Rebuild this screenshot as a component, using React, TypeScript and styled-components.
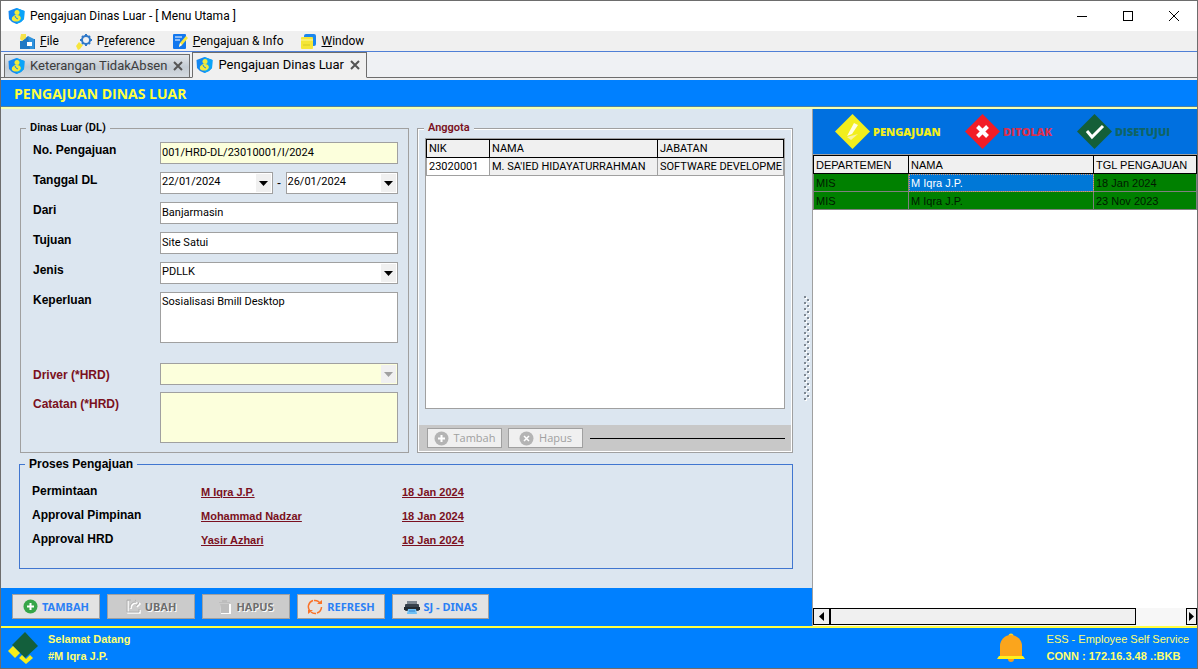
import React from "react";
import styled, { createGlobalStyle, css } from "styled-components";

const color = {
  frame: "#6d6d6d",
  blue: "#0080ff",
  deepBlue: "#0070e0",
  panel: "#dce6f0",
  yellow: "#ffff40",
  line: "#a0a0a0",
  cream: "#fcffdc",
  maroon: "#7a1020",
};

const sans = `"Liberation Sans", Arial, sans-serif`;
const ui = `"Open Sans", "Noto Sans", sans-serif`;
const narrow = `Roboto, "Liberation Sans", sans-serif`;

const GlobalStyle = createGlobalStyle`
  *, *::before, *::after { box-sizing: border-box; }
  body { margin: 0; font: 12px/16px ${sans}; color: #000; background: #fff; }
  button, input, select, textarea { font: inherit; color: inherit; margin: 0; border-radius: 0; }
`;

const Window = styled.div`
  display: flex;
  flex-direction: column;
  min-height: 100vh;
  border: 1px solid ${color.frame};
  background: #f0f0f0;
`;

const TitleBar = styled.header`
  display: flex;
  align-items: center;
  height: 30px;
  padding-left: 7px;
  gap: 5px;
  background: #fff;
  font-family: ${narrow};
`;

const Title = styled.h1`
  flex: 1;
  margin: 0;
  font-size: 12px;
  font-weight: 400;
`;

const WindowControls = styled.div`
  display: flex;
`;

const WindowButton = styled.button`
  display: grid;
  place-items: center;
  width: 46px;
  height: 30px;
  padding: 0;
  border: 0;
  background: none;
`;

const MenuBar = styled.nav`
  display: flex;
  gap: 17px;
  height: 21px;
  padding-left: 17px;
  border-bottom: 1px solid #4f7fd6;
`;

const MenuItem = styled.button`
  display: flex;
  align-items: center;
  gap: 4px;
  padding: 0;
  border: 0;
  background: none;
  font: 12px/16px ${narrow};
`;

const TabBar = styled.div`
  display: flex;
  align-items: flex-end;
  gap: 2px;
  height: 26px;
  padding-left: 3px;
  background: #eff1f4;
  box-shadow: inset 0 -1px #6d6d6d;
`;

const Tab = styled.div<{ $active?: boolean }>`
  display: flex;
  align-items: center;
  height: ${(p) => (p.$active ? 26 : 24)}px;
  padding: 0 4px 0 3px;
  border: 1px solid #6d6d6d;
  border-bottom-color: ${(p) => (p.$active ? "#f0f0f0" : "#6d6d6d")};
  background: ${(p) =>
    p.$active
      ? "#f0f0f0"
      : "linear-gradient(#e3e7eb, #c3cbd3 55%, #d5dbe1)"};
  color: ${(p) => (p.$active ? "#000" : "#3c3c3c")};
  font: 13px/16px ${narrow};
`;

const TabLabel = styled.button`
  display: flex;
  align-items: center;
  gap: 5px;
  padding: 0;
  border: 0;
  background: none;
`;

const TabClose = styled.button`
  display: grid;
  place-items: center;
  width: 22px;
  height: 20px;
  margin-right: -4px;
  padding: 0;
  border: 0;
  background: none;
`;

const PageHeader = styled.div`
  height: 29px;
  margin-top: 2px;
  padding: 6px 13px 0;
  background: ${color.blue};
  border-bottom: 2px solid #f4ffb0;
  box-shadow: inset 0 -1px #4f7f9f;
`;

const PageTitle = styled.h2`
  margin: 0;
  color: ${color.yellow};
  font: 700 14px/16px ${ui};
`;

const Body = styled.main`
  flex: 1;
  display: grid;
  grid-template-columns: minmax(0, 811fr) minmax(0, 385fr);
`;

const LeftPane = styled.section`
  display: flex;
  flex-direction: column;
`;

const Work = styled.div`
  flex: 1;
  display: grid;
  grid-template-columns: minmax(0, 1fr) 19px;
  padding-left: 18px;
  background: ${color.panel};
`;

const Sheets = styled.div`
  display: flex;
  flex-direction: column;
  gap: 4px;
  padding-top: 12px;
`;

const TopRow = styled.div`
  display: grid;
  grid-template-columns: minmax(0, 389fr) minmax(0, 376fr);
  gap: 8px;
  padding-left: 1px;
`;

const Group = styled.fieldset<{ $tone?: string; $etched?: boolean }>`
  min-width: 0;
  margin: 0;
  padding: 7px 10px 9px 12px;
  border: 1px solid ${(p) => p.$tone ?? color.line};
  ${(p) =>
    p.$etched &&
    css`
      display: flex;
      flex-direction: column;
      padding: 3px 1px 1px;
      box-shadow: inset 0 0 0 1px #fff;
    `}
`;

const Legend = styled.legend<{ $maroon?: boolean; $ui?: boolean; $inset?: number }>`
  margin-left: ${(p) => p.$inset ?? -7}px;
  padding: 0 4px;
  line-height: 14px;
  background: ${color.panel};
  font-family: ${(p) => (p.$ui ? narrow : sans)};
  font-size: ${(p) => (p.$ui ? 11 : 12)}px;
  font-weight: ${(p) => (p.$ui ? 600 : 700)};
  color: ${(p) => (p.$maroon ? color.maroon : "#000")};
`;

const Field = styled.div<{ $gap?: number }>`
  display: grid;
  grid-template-columns: 127px minmax(0, 1fr);
  margin-bottom: ${(p) => p.$gap ?? 8}px;
`;

const FieldLabel = styled.label<{ $hrd?: boolean }>`
  padding-top: ${(p) => (p.$hrd ? 4 : 0)}px;
  font-weight: 700;
  color: ${(p) => (p.$hrd ? color.maroon : "#000")};
`;

const control = css`
  width: 100%;
  padding: 0 1px 2px;
  border: 1px solid ${color.line};
  background: #fff;
  font: 11px/16px ${narrow};
  color: #000;
  outline: 0;
`;

const TextBox = styled.input<{ $cream?: boolean }>`
  ${control}
  height: 22px;
  background: ${(p) => (p.$cream ? color.cream : "#fff")};
`;

const TextArea = styled.textarea<{ $cream?: boolean }>`
  ${control}
  display: block;
  height: 51px;
  padding-top: 1px;
  resize: none;
  background: ${(p) => (p.$cream ? color.cream : "#fff")};
`;

const ComboFrame = styled.span`
  position: relative;
  display: block;
  min-width: 0;
`;

const Combo = styled.select<{ $cream?: boolean }>`
  ${control}
  display: block;
  height: 22px;
  appearance: none;
  opacity: 1;
  background: ${(p) => (p.$cream ? color.cream : "#fff")};
`;

const ComboArrow = styled.span<{ $off?: boolean }>`
  position: absolute;
  top: 2px;
  right: 2px;
  bottom: 2px;
  display: grid;
  place-items: center;
  width: 15px;
  background: #f0f0f0;
  color: ${(p) => (p.$off ? "#a0a0a0" : "#000")};
  pointer-events: none;
`;

const DateRange = styled.div`
  display: grid;
  grid-template-columns: 1fr 13px 1fr;
  text-align: center;
  line-height: 22px;
`;

const MemberBox = styled.div`
  flex: 1;
  margin: 0 6px 16px;
  border: 1px solid ${color.line};
  background: #fff;
`;

const Grid = styled.table`
  width: 100%;
  border-collapse: collapse;
  table-layout: fixed;
  font: 11px/16px ${narrow};
`;

const HeadCell = styled.th`
  height: 18px;
  padding: 0 2px;
  border: 1px solid #000;
  background: #f0f0f0;
  font-weight: 400;
  text-align: left;
  white-space: nowrap;
`;

const Cell = styled.td<{ $shade?: boolean }>`
  height: 18px;
  padding: 0 2px;
  border: 1px solid ${color.line};
  background: ${(p) => (p.$shade ? "#f0f0f0" : "#fff")};
  white-space: nowrap;
  overflow: hidden;
`;

const MemberActions = styled.div`
  display: flex;
  align-items: center;
  gap: 6px;
  height: 26px;
  padding: 0 6px 0 8px;
  background: #c8c8c8;
`;

const SmallButton = styled.button`
  display: flex;
  align-items: center;
  justify-content: center;
  gap: 5px;
  width: 75px;
  height: 20px;
  padding: 0;
  border: 1px solid ${color.line};
  background: #f0f0f0;
  color: #a0a0a0;
  font: 11px/16px ${ui};
`;

const Rule = styled.hr`
  flex: 1;
  margin: 0 0 0 1px;
  border: 0;
  border-top: 1px solid #000;
`;

const Steps = styled.dl`
  display: grid;
  grid-template-columns: 169px 201px 1fr;
  row-gap: 8px;
  margin: 0;
  padding: 5px 0 12px;
`;

const StepName = styled.dt`
  line-height: 16px;
  font-weight: 700;
`;

const StepValue = styled.dd`
  margin: 0;
  padding-top: 3px;
  line-height: 13px;
  font-size: 11px;
`;

const StepLink = styled.a`
  color: ${color.maroon};
  font-weight: 700;
  text-decoration: underline;
`;

const Splitter = styled.div`
  display: grid;
  place-items: center end;
  padding: 0 1px 0 0;
`;

const ActionBar = styled.div`
  display: flex;
  flex-wrap: wrap;
  gap: 7px;
  padding: 6px 11px 7px;
  background: ${color.blue};
`;

const ActionButton = styled.button<{ $wide?: boolean }>`
  display: flex;
  align-items: center;
  justify-content: center;
  gap: 4px;
  width: ${(p) => (p.$wide ? 97 : 88)}px;
  height: 25px;
  padding: 0;
  border: 1px solid ${color.line};
  background: #e3e3e3;
  color: #2a80f5;
  font: 700 11px/16px "Noto Sans", ${ui};
  &:disabled {
    background: #cbcbcb;
    color: #6d6d6d;
    text-shadow: 1px 1px #fff;
  }
`;

const RightPane = styled.section`
  display: flex;
  flex-direction: column;
  border-left: 1px solid ${color.line};
  background: #fff;
`;

const StatusKey = styled.ul`
  display: grid;
  grid-template-columns: 130px 112px 1fr;
  align-items: center;
  height: 46px;
  margin: 0;
  padding: 0 0 0 22px;
  list-style: none;
  background: ${color.deepBlue};
  border-bottom: 1px solid ${color.line};
`;

const KeyItem = styled.li<{ $tone: string }>`
  display: flex;
  align-items: center;
  gap: 3px;
  color: ${(p) => p.$tone};
  font: 800 11px/16px ${ui};
`;

const RequestArea = styled.div`
  flex: 1;
  overflow: hidden;
`;

const RequestGrid = styled(Grid)`
  font-family: ${sans};
`;

const RequestCell = styled(Cell)<{ $selected?: boolean }>`
  border-color: #808080;
  background: ${(p) => (p.$selected ? "#0078d7" : "#008000")};
  color: ${(p) => (p.$selected ? "#fff" : "#001a00")};
  outline: ${(p) => (p.$selected ? "1px dotted #d89a70" : "0")};
  outline-offset: -1px;
`;

const ScrollBar = styled.div`
  display: flex;
  height: 18px;
  padding-bottom: 1px;
  background: #f7f7f7;
`;

const ScrollArrow = styled.button<{ $clipped?: boolean }>`
  display: grid;
  place-items: center;
  width: ${(p) => (p.$clipped ? 11 : 17)}px;
  padding: 0;
  border: 1px solid #000;
  background: #f0f0f0;
`;

const ScrollTrack = styled.div`
  flex: 1;
`;

const ScrollThumb = styled.div`
  width: 86%;
  height: 100%;
  border: 1px solid #000;
  background: #f0f0f0;
`;

const StatusBar = styled.footer`
  display: flex;
  align-items: center;
  height: 42px;
  padding: 0 8px 0 6px;
  border-top: 2px solid ${color.yellow};
  background: ${color.blue};
  color: #ffff70;
  font-size: 11px;
`;

const StatusText = styled.p<{ $push?: boolean }>`
  margin: 0 ${(p) => (p.$push ? "auto" : "0")} 0 0;
  line-height: 17px;
`;

const Strong = styled.strong`
  display: block;
`;

const Plain = styled.span`
  display: block;
`;

const StatusIcon = styled.span<{ $gap: number }>`
  display: flex;
  margin-right: ${(p) => p.$gap}px;
`;

function AppLogo() {
  return (
    <svg width="17" height="18" viewBox="0 0 17 18" aria-hidden="true">
      <path d="M8.500 1 16.500 4l-.5 8-3 3-4.500 2L4 15l-3-3L.5 4z" fill="#1488f2" />
      <path d="M8.500 1 16.500 4l-.5 8-3 3-4.500 2z" fill="#0aa4f8" />
      <circle cx="9" cy="5.500" r="2.500" fill="#f2ea3a" />
      <path d="M4 13c-1-3 2-5 5-5s5 3 3 5c-2 2-6 2-8 0z" fill="#f2ea3a" />
      <path d="M7 9l1 2 2 1" stroke="#1488f2" fill="none" />
    </svg>
  );
}

function FileIcon() {
  return (
    <svg width="18" height="17" viewBox="0 0 18 17" aria-hidden="true">
      <path d="M2 16V8h2l6-5 2 3h5v10z" fill="#1f78c4" />
      <path d="M10 3l6 3v10h-4z" fill="#2f93de" />
      <path d="M3 1h5v4L4 8 2 6z" fill="#f4e24a" />
      <rect x="9" y="9" width="5" height="4" fill="#fff" />
    </svg>
  );
}

function GearIcon() {
  return (
    <svg width="17" height="17" viewBox="0 0 17 17" aria-hidden="true">
      <g fill="none" stroke="#2f78c8">
        <circle cx="10" cy="7" r="4" strokeWidth="2" />
        <path
          d="M10 1v2M10 11v2M4 7h2M14 7h2M6 3l1 1M13 10l1 1M14 3l-1 1M6 11l1-1"
          strokeWidth="2"
        />
      </g>
      <path d="M0 13l3-4 2 2 2 1-3 4-2 1z" fill="#f7e53c" />
    </svg>
  );
}

function NoteIcon() {
  return (
    <svg width="17" height="17" viewBox="0 0 17 17" aria-hidden="true">
      <rect x="1" y="1" width="13" height="15" rx="1" fill="#1277ee" />
      <path d="M3 4h7M3 7h5" stroke="#fff" />
      <path d="M7 14l1-4 6-7 2 2-6 7z" fill="#f7e53c" />
      <path d="M7 14l1-4 2 2z" fill="#fff" />
    </svg>
  );
}

function WindowsIcon() {
  return (
    <svg width="17" height="17" viewBox="0 0 17 17" aria-hidden="true">
      <rect x="4" y="1" width="12" height="12" rx="2" fill="#1a86ee" />
      <rect x="1" y="4" width="12" height="12" rx="1" fill="#f5e636" />
      <path d="M1 7h12" stroke="#fff8a0" />
      <path d="M3 12h7" stroke="#d6cb22" />
    </svg>
  );
}

function CloseMark() {
  return (
    <svg width="10" height="10" viewBox="0 0 10 10" aria-hidden="true">
      <path d="M1 1l8 8M9 1L1 9" stroke="#555" strokeWidth="2" />
    </svg>
  );
}

function Triangle({ dir }: { dir: "down" | "left" | "right" }) {
  const shape = { down: "M0 2h9L4.500 7z", left: "M7 0v9L2 4.500z", right: "M2 0v9l5-4.500z" }[dir];
  return (
    <svg width="9" height="9" viewBox="0 0 9 9" aria-hidden="true">
      <path d={shape} fill="currentColor" />
    </svg>
  );
}

function Disc({ tone, cross }: { tone: string; cross?: boolean }) {
  return (
    <svg width="15" height="15" viewBox="0 0 15 15" aria-hidden="true">
      <circle cx="7.500" cy="7.500" r="7" fill={tone} />
      <path
        d={cross ? "M5 5l5 5M10 5l-5 5" : "M7.500 4v7M4 7.500h7"}
        stroke="#fff"
        strokeWidth={cross ? 1.5 : 2}
      />
    </svg>
  );
}

function EditIcon() {
  return (
    <svg width="15" height="15" viewBox="0 0 15 15" fill="none" aria-hidden="true">
      <path d="M2 2v12h12v-3M5 10c0-4 2-6 6-6M10 2l4 3-3 3" stroke="#fff" strokeWidth="1.500" />
      <path d="M5 1H1v12h12v-3M4 9c0-4 2-6 6-6M9 1l4 3-3 3" stroke="#b0b0b0" />
    </svg>
  );
}

function TrashIcon() {
  return (
    <svg width="14" height="14" viewBox="0 0 14 14" aria-hidden="true">
      <path d="M2 4h11v10H3z" fill="#fff" />
      <path d="M1 2h11v1H1zM4 0h5v2H4zM2 4h9v9H3z" fill="#bdbdbd" />
    </svg>
  );
}

function RefreshIcon() {
  return (
    <svg width="16" height="16" viewBox="0 0 16 16" fill="none" aria-hidden="true">
      <path
        d="M6 1.500A6.500 6.500 0 0 0 3 12M7 1.500A6.500 6.500 0 0 1 13.500 5M14.500 8A6.500 6.500 0 0 1 10 14M9 14.500A6.500 6.500 0 0 1 4 13"
        stroke="#fa7228"
        strokeWidth="1.500"
      />
      <path d="M10 5h5V1zM6 11H1v4z" fill="#fa7228" />
    </svg>
  );
}

function PrinterIcon() {
  return (
    <svg width="16" height="16" viewBox="0 0 16 16" aria-hidden="true">
      <rect x="3" y="2" width="10" height="4" fill="#7d8791" />
      <rect x="1" y="5" width="14" height="7" rx="1" fill="#37414b" />
      <path d="M0 8h16v3H0z" fill="#222a31" />
      <path d="M4 10h8l1 5H3z" fill="#6fc0f4" />
      <path d="M5 12h6" stroke="#2f7fd0" />
    </svg>
  );
}

function Diamond({ tone, kind }: { tone: string; kind: "draft" | "cross" | "check" }) {
  return (
    <svg width="35" height="35" viewBox="0 0 35 35" fill="none" aria-hidden="true">
      <path d="M17.500 0 35 17.500 17.500 35 0 17.500z" fill={tone} />
      {kind === "draft" && (
        <>
          <path d="M19 9l4 2-6 9-5 2z" fill="#fffde0" />
          <path d="M12 23l11-3-7 6z" fill="#f8f3a0" />
        </>
      )}
      {kind === "cross" && (
        <path d="M12.500 12.500l10 10M22.500 12.500l-10 10" stroke="#fff" strokeWidth="4" />
      )}
      {kind === "check" && <path d="M10 17l5 6 11-11" stroke="#fff" strokeWidth="3" />}
    </svg>
  );
}

function CompanyLogo() {
  return (
    <svg width="32" height="34" viewBox="0 0 32 34" aria-hidden="true">
      <path d="M18 1l13 14-13 12L5 14z" fill="#135f3c" />
      <path d="M6 15l7 7-5 5-7-7z" fill="#f6ee1a" />
      <path d="M12 27l3-3 4 4 4-4 3 3-7 6z" fill="#f6ee1a" />
    </svg>
  );
}

function BellIcon() {
  return (
    <svg width="30" height="30" viewBox="0 0 30 30" aria-hidden="true">
      <circle cx="15" cy="3" r="2.500" fill="#ffd21f" />
      <circle cx="15" cy="26" r="3" fill="#f59a1a" />
      <path d="M4 24V13a11 11 0 0 1 22 0v11z" fill="#fba51c" />
      <path d="M3 23h24l2 3H1z" fill="#fff01c" />
    </svg>
  );
}

function Grip() {
  const dots = Array.from({ length: 35 }, (_, i) => i);
  return (
    <svg width="7" height="106" viewBox="0 0 7 106" aria-hidden="true">
      {dots.map((i) => (
        <React.Fragment key={i}>
          <rect x={(i % 2) * 3 + 1} y={i * 3 + 1} width="2" height="2" fill="#fff" />
          <rect x={(i % 2) * 3} y={i * 3} width="2" height="2" fill="#7d8791" />
        </React.Fragment>
      ))}
    </svg>
  );
}

function ComboBox(props: { id: string; label?: string; value: string; disabled?: boolean }) {
  return (
    <ComboFrame>
      <Combo
        id={props.id}
        aria-label={props.label}
        disabled={props.disabled}
        $cream={props.disabled}
        defaultValue={props.value}
      >
        <option value={props.value}>{props.value}</option>
      </Combo>
      <ComboArrow $off={props.disabled}>
        <Triangle dir="down" />
      </ComboArrow>
    </ComboFrame>
  );
}

const menus = [
  { before: "", key: "F", after: "ile", icon: <FileIcon /> },
  { before: "P", key: "r", after: "eference", icon: <GearIcon /> },
  { before: "", key: "P", after: "engajuan & Info", icon: <NoteIcon /> },
  { before: "", key: "W", after: "indow", icon: <WindowsIcon /> },
];

const steps = [
  { name: "Permintaan", by: "M Iqra J.P.", date: "18 Jan 2024" },
  { name: "Approval Pimpinan", by: "Mohammad Nadzar", date: "18 Jan 2024" },
  { name: "Approval HRD", by: "Yasir Azhari", date: "18 Jan 2024" },
];

const requests = [
  { dept: "MIS", name: "M Iqra J.P.", date: "18 Jan 2024" },
  { dept: "MIS", name: "M Iqra J.P.", date: "23 Nov 2023" },
];

export default function App() {
  return (
    <Window>
      <GlobalStyle />
      <TitleBar>
        <AppLogo />
        <Title>Pengajuan Dinas Luar - [ Menu Utama ]</Title>
        <WindowControls>
          <WindowButton aria-label="Minimize">
            <svg width="10" height="10" viewBox="0 0 10 10">
              <path d="M0 5.500h10" stroke="#000" />
            </svg>
          </WindowButton>
          <WindowButton aria-label="Maximize">
            <svg width="10" height="10" viewBox="0 0 10 10">
              <rect x="0.500" y="0.500" width="9" height="9" fill="none" stroke="#000" />
            </svg>
          </WindowButton>
          <WindowButton aria-label="Close">
            <svg width="10" height="10" viewBox="0 0 10 10">
              <path d="M0 0l10 10M10 0L0 10" stroke="#000" />
            </svg>
          </WindowButton>
        </WindowControls>
      </TitleBar>

      <MenuBar>
        {menus.map((m) => (
          <MenuItem key={m.after}>
            {m.icon}
            <span>
              {m.before}
              <u>{m.key}</u>
              {m.after}
            </span>
          </MenuItem>
        ))}
      </MenuBar>

      <TabBar>
        <Tab>
          <TabLabel>
            <AppLogo />
            Keterangan TidakAbsen
          </TabLabel>
          <TabClose aria-label="Close Keterangan TidakAbsen">
            <CloseMark />
          </TabClose>
        </Tab>
        <Tab $active>
          <TabLabel>
            <AppLogo />
            Pengajuan Dinas Luar
          </TabLabel>
          <TabClose aria-label="Close Pengajuan Dinas Luar">
            <CloseMark />
          </TabClose>
        </Tab>
      </TabBar>

      <PageHeader>
        <PageTitle>PENGAJUAN DINAS LUAR</PageTitle>
      </PageHeader>

      <Body>
        <LeftPane>
          <Work>
            <Sheets>
              <TopRow>
                <Group>
                  <Legend $ui>Dinas Luar (DL)</Legend>
                  <Field>
                    <FieldLabel htmlFor="no">No. Pengajuan</FieldLabel>
                    <TextBox id="no" $cream defaultValue="001/HRD-DL/23010001/I/2024" />
                  </Field>
                  <Field>
                    <FieldLabel htmlFor="from">Tanggal DL</FieldLabel>
                    <DateRange>
                      <ComboBox id="from" value="22/01/2024" />
                      <span>-</span>
                      <ComboBox id="to" label="Tanggal DL sampai" value="26/01/2024" />
                    </DateRange>
                  </Field>
                  <Field>
                    <FieldLabel htmlFor="dari">Dari</FieldLabel>
                    <TextBox id="dari" defaultValue="Banjarmasin" />
                  </Field>
                  <Field>
                    <FieldLabel htmlFor="tujuan">Tujuan</FieldLabel>
                    <TextBox id="tujuan" defaultValue="Site Satui" />
                  </Field>
                  <Field>
                    <FieldLabel htmlFor="jenis">Jenis</FieldLabel>
                    <ComboBox id="jenis" value="PDLLK" />
                  </Field>
                  <Field $gap={20}>
                    <FieldLabel htmlFor="keperluan">Keperluan</FieldLabel>
                    <TextArea id="keperluan" defaultValue="Sosialisasi Bmill Desktop" />
                  </Field>
                  <Field $gap={7}>
                    <FieldLabel $hrd htmlFor="driver">
                      Driver (*HRD)
                    </FieldLabel>
                    <ComboBox id="driver" value="" disabled />
                  </Field>
                  <Field $gap={0}>
                    <FieldLabel $hrd htmlFor="catatan">
                      Catatan (*HRD)
                    </FieldLabel>
                    <TextArea id="catatan" $cream readOnly />
                  </Field>
                </Group>

                <Group $etched>
                  <Legend $ui $maroon $inset={5}>
                    Anggota
                  </Legend>
                  <MemberBox>
                    <Grid>
                      <colgroup>
                        <col width="63" />
                        <col width="168" />
                        <col />
                      </colgroup>
                      <thead>
                        <tr>
                          <HeadCell>NIK</HeadCell>
                          <HeadCell>NAMA</HeadCell>
                          <HeadCell>JABATAN</HeadCell>
                        </tr>
                      </thead>
                      <tbody>
                        <tr>
                          <Cell>23020001</Cell>
                          <Cell $shade>M. SA'IED HIDAYATURRAHMAN</Cell>
                          <Cell $shade>SOFTWARE DEVELOPME</Cell>
                        </tr>
                      </tbody>
                    </Grid>
                  </MemberBox>
                  <MemberActions>
                    <SmallButton disabled>
                      <Disc tone="#b4b4b4" />
                      Tambah
                    </SmallButton>
                    <SmallButton disabled>
                      <Disc tone="#b4b4b4" cross />
                      Hapus
                    </SmallButton>
                    <Rule />
                  </MemberActions>
                </Group>
              </TopRow>

              <Group $tone="#4076d0">
                <Legend>Proses Pengajuan</Legend>
                <Steps>
                  {steps.map((s) => (
                    <React.Fragment key={s.name}>
                      <StepName>{s.name}</StepName>
                      <StepValue>
                        <StepLink href="#">{s.by}</StepLink>
                      </StepValue>
                      <StepValue>
                        <StepLink href="#">{s.date}</StepLink>
                      </StepValue>
                    </React.Fragment>
                  ))}
                </Steps>
              </Group>
            </Sheets>
            <Splitter>
              <Grip />
            </Splitter>
          </Work>

          <ActionBar>
            <ActionButton>
              <Disc tone="#36a649" />
              TAMBAH
            </ActionButton>
            <ActionButton disabled>
              <EditIcon />
              UBAH
            </ActionButton>
            <ActionButton disabled>
              <TrashIcon />
              HAPUS
            </ActionButton>
            <ActionButton>
              <RefreshIcon />
              REFRESH
            </ActionButton>
            <ActionButton $wide>
              <PrinterIcon />
              SJ - DINAS
            </ActionButton>
          </ActionBar>
        </LeftPane>

        <RightPane>
          <StatusKey>
            <KeyItem $tone="#f2ee1c">
              <Diamond tone="#f2ee1c" kind="draft" />
              PENGAJUAN
            </KeyItem>
            <KeyItem $tone="#d8304f">
              <Diamond tone="#f21d26" kind="cross" />
              DITOLAK
            </KeyItem>
            <KeyItem $tone="#0f6466">
              <Diamond tone="#145f38" kind="check" />
              DISETUJUI
            </KeyItem>
          </StatusKey>
          <RequestArea>
            <RequestGrid>
              <colgroup>
                <col width="95" />
                <col width="185" />
                <col />
              </colgroup>
              <thead>
                <tr>
                  <HeadCell>DEPARTEMEN</HeadCell>
                  <HeadCell>NAMA</HeadCell>
                  <HeadCell>TGL PENGAJUAN</HeadCell>
                </tr>
              </thead>
              <tbody>
                {requests.map((r, i) => (
                  <tr key={r.date}>
                    <RequestCell>{r.dept}</RequestCell>
                    <RequestCell $selected={i === 0}>{r.name}</RequestCell>
                    <RequestCell>{r.date}</RequestCell>
                  </tr>
                ))}
              </tbody>
            </RequestGrid>
          </RequestArea>
          <ScrollBar>
            <ScrollArrow aria-label="Scroll left">
              <Triangle dir="left" />
            </ScrollArrow>
            <ScrollTrack>
              <ScrollThumb />
            </ScrollTrack>
            <ScrollArrow $clipped aria-label="Scroll right">
              <Triangle dir="right" />
            </ScrollArrow>
          </ScrollBar>
        </RightPane>
      </Body>

      <StatusBar>
        <StatusIcon $gap={9}>
          <CompanyLogo />
        </StatusIcon>
        <StatusText $push>
          <Strong>Selamat Datang</Strong>
          <Strong>#M Iqra J.P.</Strong>
        </StatusText>
        <StatusIcon $gap={21}>
          <BellIcon />
        </StatusIcon>
        <StatusText>
          <Plain>ESS - Employee Self Service</Plain>
          <Strong>CONN : 172.16.3.48 .:BKB</Strong>
        </StatusText>
      </StatusBar>
    </Window>
  );
}
